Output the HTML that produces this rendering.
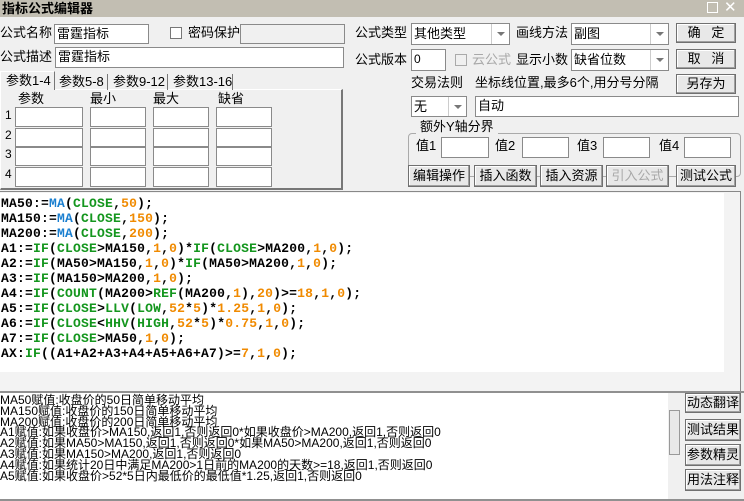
<!DOCTYPE html>
<html><head><meta charset="utf-8"><style>
*{box-sizing:border-box;margin:0;padding:0}
body{width:744px;height:501px;overflow:hidden;background:#f0f0f0;font-family:"Liberation Sans","Noto Sans CJK SC","WenQuanYi Zen Hei",sans-serif;font-size:13px;color:#000;position:relative}
.a{position:absolute;white-space:nowrap}
.t{position:absolute;white-space:nowrap;line-height:20px}
.in{position:absolute;background:#fff;border:1px solid #8a8a8a;font-size:13px;line-height:18px;padding-left:2px;white-space:nowrap}
.sel .ar{position:absolute;right:0;top:0;bottom:0;width:18px;border-left:1px solid #ccc;background:#fff}
.sel .ar:after{content:"";position:absolute;left:5px;top:8px;border-left:4px solid transparent;border-right:4px solid transparent;border-top:4px solid #777}
.btn{position:absolute;background:#e8e8e8;border:1px solid #707070;box-shadow:inset -1px -1px 0 #a0a0a0,inset 1px 1px 0 #fff;text-align:center;font-size:13px;white-space:nowrap}
.cb{position:absolute;width:12px;height:12px;background:#fff;border:1px solid #777}
#code{position:absolute;left:0;top:193px;width:724px;height:179px;background:#fff;font-family:"Liberation Mono",monospace;font-weight:bold;font-size:13px;line-height:15px;padding:3px 0 0 1px;letter-spacing:0.2px}
#code div{white-space:pre}
.b{color:#1a7fd0}.g{color:#14961e}.o{color:#f08a00}
#bot{position:absolute;left:0;top:393px;width:668px;height:106px;background:#fff;font-size:12px;line-height:10.8px;padding-top:2px;overflow:hidden}
#bot div{white-space:nowrap}
</style></head><body>
<div class="a" style="left:0;top:0;width:744px;height:17px;background:#c2beb2"></div>
<div class="a" style="left:2px;top:0;font-weight:bold;font-size:13px;line-height:17px">指标公式编辑器</div>
<div class="a" style="left:707px;top:2px;width:11px;height:11px;border:1px solid #fff"></div>
<div class="a" style="left:724px;top:-1px;color:#fff;font-size:15px;line-height:17px">✕</div>

<div class="t" style="left:0;top:23px">公式名称</div>
<div class="in" style="left:54px;top:24px;width:95px;height:20px">雷霆指标</div>
<div class="cb" style="left:170px;top:27px"></div>
<div class="t" style="left:188px;top:23px">密码保护</div>
<div class="in" style="left:240px;top:24px;width:105px;height:20px;background:#f0f0f0"></div>
<div class="t" style="left:0;top:47px">公式描述</div>
<div class="in" style="left:55px;top:47px;width:289px;height:21px">雷霆指标</div>

<div class="a" style="left:0;top:89px;width:343px;height:101px;border:1px solid #fff;border-right:2px solid #777;border-bottom:2px solid #777"></div>
<div class="a" style="left:0;top:71px;width:55px;height:19px;background:#f0f0f0;border:1px solid #fff;border-bottom:none;border-right:1px solid #777;padding-left:5px;line-height:17px">参数1-4</div>
<div class="a" style="left:56px;top:74px;width:52px;height:16px;border-right:1px solid #777;padding-left:3px;line-height:15px">参数5-8</div>
<div class="a" style="left:110px;top:74px;width:58px;height:16px;border-right:1px solid #777;padding-left:3px;line-height:15px">参数9-12</div>
<div class="a" style="left:170px;top:74px;width:63px;height:16px;border-right:1px solid #777;padding-left:3px;line-height:15px">参数13-16</div>
<div class="t" style="left:18px;top:89px">参数</div>
<div class="t" style="left:90px;top:89px">最小</div>
<div class="t" style="left:153px;top:89px">最大</div>
<div class="t" style="left:218px;top:89px">缺省</div>
<div class="a" style="left:5px;top:105px;line-height:20px;font-size:12px">1</div>
<div class="a" style="left:5px;top:125px;line-height:20px;font-size:12px">2</div>
<div class="a" style="left:5px;top:144px;line-height:20px;font-size:12px">3</div>
<div class="a" style="left:5px;top:164px;line-height:20px;font-size:12px">4</div>
<div class="in" style="left:15px;top:107px;width:68px;height:20px"></div><div class="in" style="left:90px;top:107px;width:56px;height:20px"></div><div class="in" style="left:153px;top:107px;width:56px;height:20px"></div><div class="in" style="left:216px;top:107px;width:56px;height:20px"></div>
<div class="in" style="left:15px;top:128px;width:68px;height:19px"></div><div class="in" style="left:90px;top:128px;width:56px;height:19px"></div><div class="in" style="left:153px;top:128px;width:56px;height:19px"></div><div class="in" style="left:216px;top:128px;width:56px;height:19px"></div>
<div class="in" style="left:15px;top:147px;width:68px;height:19px"></div><div class="in" style="left:90px;top:147px;width:56px;height:19px"></div><div class="in" style="left:153px;top:147px;width:56px;height:19px"></div><div class="in" style="left:216px;top:147px;width:56px;height:19px"></div>
<div class="in" style="left:15px;top:167px;width:68px;height:20px"></div><div class="in" style="left:90px;top:167px;width:56px;height:20px"></div><div class="in" style="left:153px;top:167px;width:56px;height:20px"></div><div class="in" style="left:216px;top:167px;width:56px;height:20px"></div>

<div class="t" style="left:355px;top:23px">公式类型</div>
<div class="in sel" style="left:411px;top:23px;width:99px;height:22px;line-height:20px">其他类型<span class="ar"></span></div>
<div class="t" style="left:516px;top:23px">画线方法</div>
<div class="in sel" style="left:571px;top:23px;width:98px;height:22px;line-height:20px">副图<span class="ar"></span></div>
<div class="btn" style="left:676px;top:23px;width:60px;height:20px;line-height:18px">确&nbsp;&nbsp;&nbsp;定</div>
<div class="t" style="left:355px;top:50px">公式版本</div>
<div class="in" style="left:411px;top:49px;width:35px;height:22px;font-size:12px">0</div>
<div class="cb" style="left:455px;top:54px;background:#f0f0f0;border-color:#aaa"></div>
<div class="t" style="left:472px;top:50px;color:#a8a8a8">云公式</div>
<div class="t" style="left:516px;top:50px">显示小数</div>
<div class="in sel" style="left:571px;top:49px;width:98px;height:22px;line-height:20px">缺省位数<span class="ar"></span></div>
<div class="btn" style="left:676px;top:49px;width:60px;height:20px;line-height:18px">取&nbsp;&nbsp;&nbsp;消</div>
<div class="t" style="left:411px;top:73px">交易法则</div>
<div class="t" style="left:475px;top:73px">坐标线位置,最多6个,用分号分隔</div>
<div class="btn" style="left:676px;top:74px;width:60px;height:20px;line-height:18px">另存为</div>
<div class="in sel" style="left:411px;top:96px;width:56px;height:21px;line-height:19px">无<span class="ar"></span></div>
<div class="in" style="left:475px;top:96px;width:264px;height:21px">自动</div>

<div class="a" style="left:408px;top:133px;width:333px;height:44px;border:1px solid #aaa;border-radius:4px"></div>
<div class="a" style="left:416px;top:118px;background:#f0f0f0;padding:0 4px;line-height:18px">额外Y轴分界</div>
<div class="t" style="left:416px;top:136px">值1</div><div class="in" style="left:441px;top:137px;width:48px;height:21px"></div>
<div class="t" style="left:495px;top:136px">值2</div><div class="in" style="left:522px;top:137px;width:47px;height:21px"></div>
<div class="t" style="left:577px;top:136px">值3</div><div class="in" style="left:603px;top:137px;width:47px;height:21px"></div>
<div class="t" style="left:659px;top:136px">值4</div><div class="in" style="left:684px;top:137px;width:47px;height:21px"></div>

<div class="btn" style="left:408px;top:165px;width:62px;height:22px;line-height:20px">编辑操作</div>
<div class="btn" style="left:474px;top:165px;width:63px;height:22px;line-height:20px">插入函数</div>
<div class="btn" style="left:540px;top:165px;width:63px;height:22px;line-height:20px">插入资源</div>
<div class="btn" style="left:606px;top:165px;width:63px;height:22px;line-height:20px;color:#a8a8a8">引入公式</div>
<div class="btn" style="left:676px;top:165px;width:60px;height:22px;line-height:20px">测试公式</div>

<div class="a" style="left:0;top:191px;width:741px;height:201px;border-top:1px solid #888;border-right:1px solid #888;background:#f3f3f3"></div>
<div id="code">
<div>MA50:=<span class="b">MA</span>(<span class="g">CLOSE</span>,<span class="o">50</span>);</div>
<div>MA150:=<span class="b">MA</span>(<span class="g">CLOSE</span>,<span class="o">150</span>);</div>
<div>MA200:=<span class="b">MA</span>(<span class="g">CLOSE</span>,<span class="o">200</span>);</div>
<div>A1:=<span class="g">IF</span>(<span class="g">CLOSE</span>&gt;MA150,<span class="o">1</span>,<span class="o">0</span>)*<span class="g">IF</span>(<span class="g">CLOSE</span>&gt;MA200,<span class="o">1</span>,<span class="o">0</span>);</div>
<div>A2:=<span class="g">IF</span>(MA50&gt;MA150,<span class="o">1</span>,<span class="o">0</span>)*<span class="g">IF</span>(MA50&gt;MA200,<span class="o">1</span>,<span class="o">0</span>);</div>
<div>A3:=<span class="g">IF</span>(MA150&gt;MA200,<span class="o">1</span>,<span class="o">0</span>);</div>
<div>A4:=<span class="g">IF</span>(<span class="g">COUNT</span>(MA200&gt;<span class="g">REF</span>(MA200,<span class="o">1</span>),<span class="o">20</span>)&gt;=<span class="o">18</span>,<span class="o">1</span>,<span class="o">0</span>);</div>
<div>A5:=<span class="g">IF</span>(<span class="g">CLOSE</span>&gt;<span class="g">LLV</span>(<span class="g">LOW</span>,<span class="o">52</span>*<span class="o">5</span>)*<span class="o">1.25</span>,<span class="o">1</span>,<span class="o">0</span>);</div>
<div>A6:=<span class="g">IF</span>(<span class="g">CLOSE</span>&lt;<span class="g">HHV</span>(<span class="g">HIGH</span>,<span class="o">52</span>*<span class="o">5</span>)*<span class="o">0.75</span>,<span class="o">1</span>,<span class="o">0</span>);</div>
<div>A7:=<span class="g">IF</span>(<span class="g">CLOSE</span>&gt;MA50,<span class="o">1</span>,<span class="o">0</span>);</div>
<div>AX:<span class="g">IF</span>((A1+A2+A3+A4+A5+A6+A7)&gt;=<span class="o">7</span>,<span class="o">1</span>,<span class="o">0</span>);</div>
</div>

<div class="a" style="left:0;top:391px;width:744px;height:2px;background:#909090"></div>
<div id="bot">
<div>MA50赋值:收盘价的50日简单移动平均</div>
<div>MA150赋值:收盘价的150日简单移动平均</div>
<div>MA200赋值:收盘价的200日简单移动平均</div>
<div>A1赋值:如果收盘价&gt;MA150,返回1,否则返回0*如果收盘价&gt;MA200,返回1,否则返回0</div>
<div>A2赋值:如果MA50&gt;MA150,返回1,否则返回0*如果MA50&gt;MA200,返回1,否则返回0</div>
<div>A3赋值:如果MA150&gt;MA200,返回1,否则返回0</div>
<div>A4赋值:如果统计20日中满足MA200&gt;1日前的MA200的天数&gt;=18,返回1,否则返回0</div>
<div>A5赋值:如果收盘价&gt;52*5日内最低价的最低值*1.25,返回1,否则返回0</div>
</div>
<div class="a" style="left:668px;top:393px;width:14px;height:106px;background:#f0f0f0"></div>
<div class="a" style="left:669px;top:410px;width:11px;height:45px;background:#e8e8e8;border:1px solid #999"></div>
<div class="btn" style="left:685px;top:393px;width:56px;height:20px;line-height:18px">动态翻译</div>
<div class="btn" style="left:685px;top:419px;width:56px;height:22px;line-height:20px">测试结果</div>
<div class="btn" style="left:685px;top:444px;width:56px;height:22px;line-height:20px">参数精灵</div>
<div class="btn" style="left:685px;top:469px;width:56px;height:22px;line-height:20px">用法注释</div>
<div class="a" style="left:0;top:499px;width:744px;height:2px;background:#909090"></div>
</body></html>
